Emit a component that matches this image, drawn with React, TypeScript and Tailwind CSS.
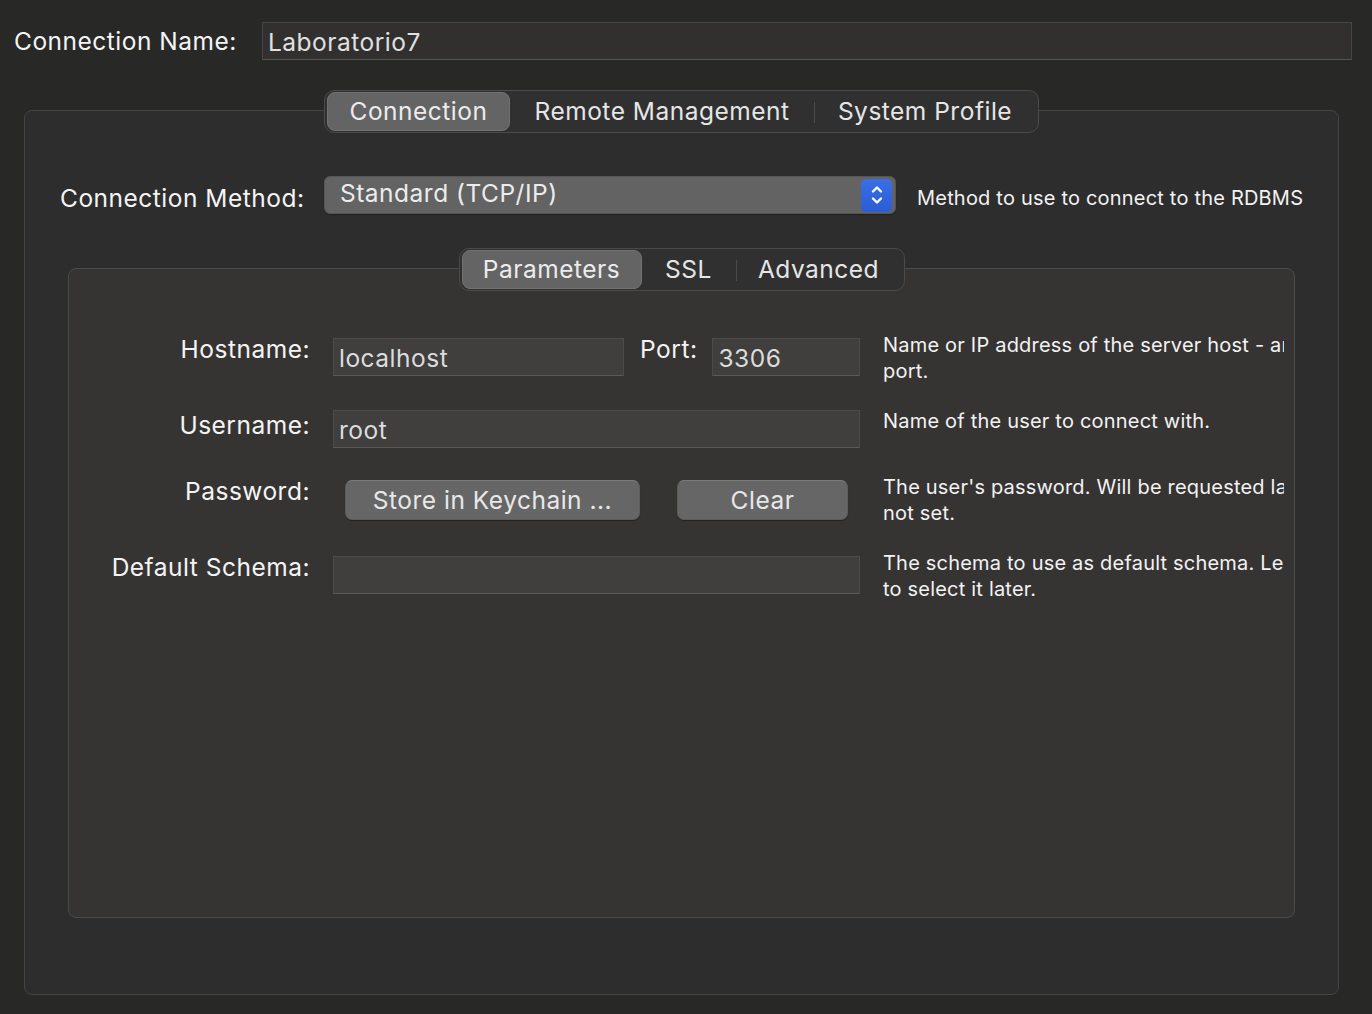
import { ReactNode } from 'react';

const font = { fontFamily: 'Inter, "Noto Sans", "Liberation Sans", sans-serif' };

interface Segment {
  label: string;
  width: string;
}

function SegmentedControl({ segments, selected }: { segments: Segment[]; selected: number }) {
  return (
    <div className="relative z-10 mx-auto flex h-[43px] items-center rounded-[10px] border border-[#4a4a4a] bg-[#303030] px-[2px]">
      {segments.map((seg, i) => {
        const isSelected = i === selected;
        const showSep = i > 0 && i !== selected && i - 1 !== selected;
        return (
          <div key={seg.label} className={`relative flex h-[39px] items-center justify-center ${seg.width}`}>
            {showSep && <div className="absolute left-0 top-[10px] h-[21px] w-px bg-[#4a4a4a]" />}
            <div
              className={`flex h-full w-full items-center justify-center rounded-[8px] text-[24.5px] tracking-[0.5px] ${
                isSelected ? 'border border-[#727272] bg-[#646464] text-[#ececec]' : 'text-[#e6e6e6]'
              }`}
            >
              {seg.label}
            </div>
          </div>
        );
      })}
    </div>
  );
}

function TextInput({ value, className }: { value?: string; className: string }) {
  return (
    <div
      className={`flex h-[38px] items-center border border-[#4b4b4b] border-b-[#5a5a5a] bg-[#403f3e] pl-[5px] pt-[3px] text-[24.5px] tracking-[0.5px] text-[#dcdcdc] ${className}`}
    >
      {value}
    </div>
  );
}

function Help({ lines }: { lines: string[] }) {
  return (
    <div className="w-[401px] overflow-hidden text-[20px] leading-[26px] tracking-[0.2px] text-[#f2f2f2]">
      {lines.map((l) => (
        <div key={l} className="whitespace-nowrap">
          {l}
        </div>
      ))}
    </div>
  );
}

function Label({ children, className = 'mt-[3px]' }: { children: ReactNode; className?: string }) {
  return (
    <div className={`w-[241px] shrink-0 text-right text-[24.5px] leading-[28px] tracking-[0.5px] text-[#f4f4f4] ${className}`}>
      {children}
    </div>
  );
}

function MacButton({ children, className }: { children: ReactNode; className: string }) {
  return (
    <div
      className={`flex h-[40px] items-center justify-center rounded-[7px] border border-[#5c5c5c] border-t-[#7a7a7a] bg-[#666666] text-[24.5px] tracking-[0.5px] text-[#e8e8e8] shadow-[0_1px_1px_rgba(0,0,0,0.35)] ${className}`}
    >
      {children}
    </div>
  );
}

export default function App() {
  return (
    <div className="h-[1014px] w-[1372px] overflow-hidden bg-[#282827] pt-[22px]" style={font}>
      {/* Connection name */}
      <div className="flex items-center pl-[14px] pr-[20px]">
        <div className="w-[248px] shrink-0 text-[24.5px] tracking-[0.5px] text-[#f4f4f4]">Connection Name:</div>
        <div className="flex h-[38px] flex-1 items-center border border-[#464646] border-b-[#555555] bg-[#31302f] pl-[5px] pt-[3px] text-[24.5px] tracking-[0.5px] text-[#e0e0e0]">
          Laboratorio7
        </div>
      </div>

      {/* Outer box */}
      <div className="ml-[24px] mr-[33px] mt-[50px] flex h-[885px] flex-col rounded-[8px] border border-[#454545] bg-[#2d2d2d]">
        <div className="-mt-[21px] flex">
          <SegmentedControl
            selected={0}
            segments={[
              { label: 'Connection', width: 'w-[183px]' },
              { label: 'Remote Management', width: 'w-[304px]' },
              { label: 'System Profile', width: 'w-[222px]' },
            ]}
          />
        </div>

        {/* Connection method */}
        <div className="mt-[43px] flex items-start pl-[35px]">
          <div className="mt-[8px] w-[264px] shrink-0 text-[24.5px] leading-[28px] tracking-[0.5px] text-[#f4f4f4]">Connection Method:</div>
          <div className="flex h-[38px] w-[572px] items-center justify-between rounded-[6px] border border-[#555555] bg-[#636363] pl-[15px] pr-[3px] text-[24.5px] tracking-[0.5px] text-[#ececec] shadow-[0_1px_1px_rgba(0,0,0,0.3)]">
            <span className="-mt-[3px]">Standard (TCP/IP)</span>
            <div className="flex h-[33px] w-[31px] items-center justify-center rounded-[5px] bg-gradient-to-b from-[#3a6fe6] to-[#2b5cd3]">
              <svg width="14" height="24" viewBox="0 0 14 24" fill="none" stroke="white" strokeWidth="2.4" strokeLinecap="round" strokeLinejoin="round">
                <path d="M3 8.5 7 4.5l4 4" />
                <path d="M3 15.5l4 4 4-4" />
              </svg>
            </div>
          </div>
          <div className="ml-[21px] mt-[9px] text-[20px] leading-[26px] tracking-[0.2px] text-[#f2f2f2]">Method to use to connect to the RDBMS</div>
        </div>

        {/* Inner box */}
        <div className="ml-[43px] mr-[43px] mt-[54px] flex h-[650px] flex-col rounded-[8px] border border-[#4a4a4a] bg-[#363432]">
          <div className="-mt-[21px] flex">
            <SegmentedControl
              selected={0}
              segments={[
                { label: 'Parameters', width: 'w-[180px]' },
                { label: 'SSL', width: 'w-[94px]' },
                { label: 'Advanced', width: 'w-[166px]' },
              ]}
            />
          </div>

          {/* Hostname / Port */}
          <div className="mt-[41px] flex items-start">
            <Label>Hostname:</Label>
            <div className="ml-[23px] mt-[6px] flex w-[527px] shrink-0 items-start">
              <TextInput value="localhost" className="w-[292px]" />
              <div className="ml-[16px] -mt-[3px] text-[24.5px] leading-[28px] tracking-[0.5px] text-[#f4f4f4]">Port:</div>
              <TextInput value="3306" className="ml-[15px] w-[148px]" />
            </div>
            <div className="ml-[23px]">
              <Help lines={['Name or IP address of the server host - and TCP/IP', 'port.']} />
            </div>
          </div>

          {/* Username */}
          <div className="mt-[24px] flex items-start">
            <Label className="mt-[3px]">Username:</Label>
            <TextInput value="root" className="ml-[23px] mt-[2px] w-[527px] shrink-0" />
            <div className="ml-[23px]">
              <Help lines={['Name of the user to connect with.']} />
            </div>
          </div>

          {/* Password */}
          <div className="mt-[26px] flex items-start">
            <Label>Password:</Label>
            <div className="ml-[23px] mt-[6px] flex w-[527px] shrink-0 pl-[12px]">
              <MacButton className="w-[295px]">Store in Keychain ...</MacButton>
              <MacButton className="ml-[37px] w-[171px]">Clear</MacButton>
            </div>
            <div className="ml-[23px]">
              <Help lines={["The user's password. Will be requested later if it's", 'not set.']} />
            </div>
          </div>

          {/* Default schema */}
          <div className="mt-[24px] flex items-start">
            <Label>Default Schema:</Label>
            <TextInput className="ml-[23px] mt-[6px] w-[527px] shrink-0" />
            <div className="ml-[23px]">
              <Help lines={['The schema to use as default schema. Leave blank', 'to select it later.']} />
            </div>
          </div>
        </div>
      </div>
    </div>
  );
}
